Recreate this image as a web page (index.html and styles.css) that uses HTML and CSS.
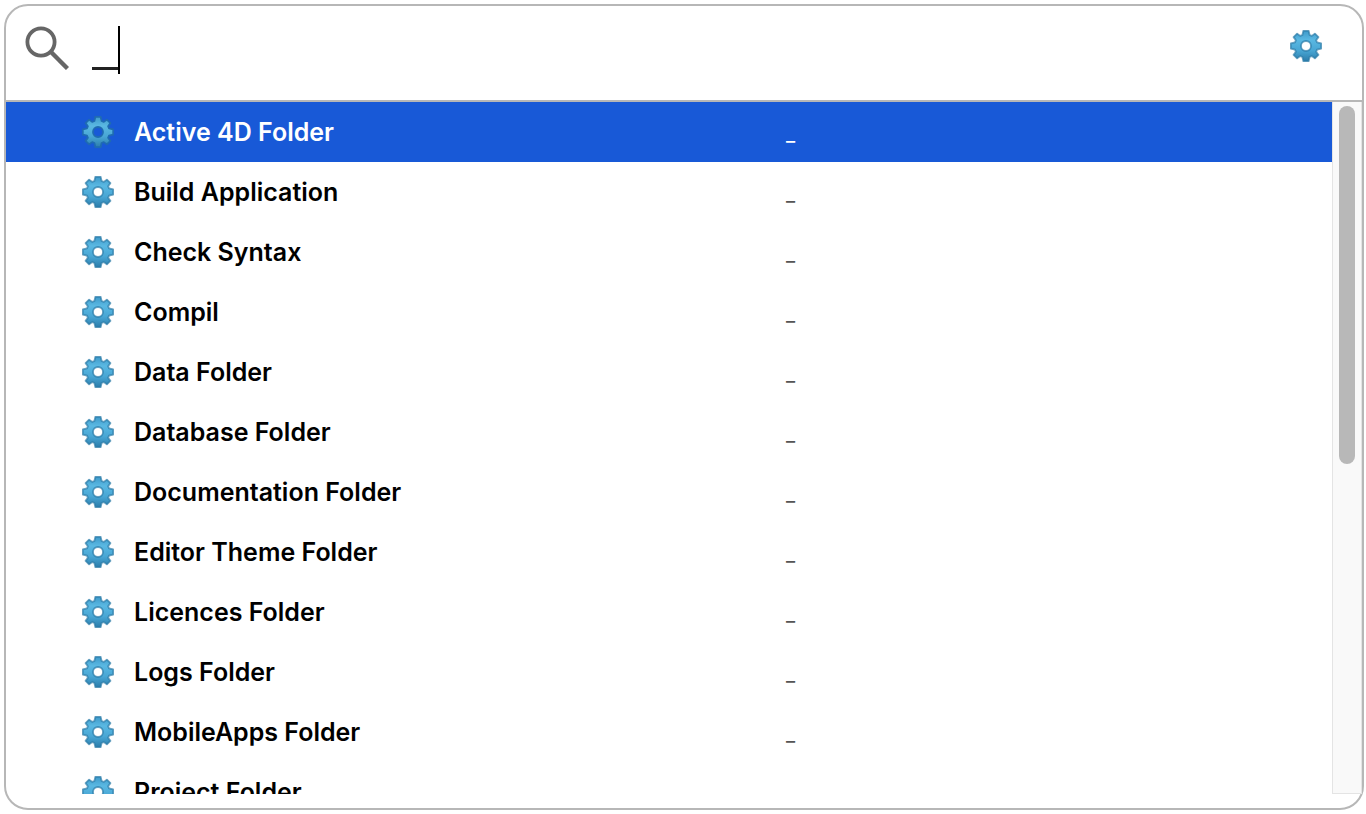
FILE: index.html
```html
<!DOCTYPE html>
<html lang="en">
<head>
<meta charset="utf-8">
<title>Quick Open</title>
<link rel="stylesheet" href="styles.css">
</head>
<body>
<svg class="defs" aria-hidden="true">
  <defs>
    <linearGradient id="gear-fill" x1="0" y1="0" x2="0" y2="1">
      <stop offset="0" stop-color="#3f9aca"/>
      <stop offset="0.3" stop-color="#5ab8e2"/>
      <stop offset="0.65" stop-color="#48a6d4"/>
      <stop offset="1" stop-color="#2c7dab"/>
    </linearGradient>
    <symbol id="gear" viewBox="0 0 32 32">
      <path class="gear-shape" fill="url(#gear-fill)" stroke-width="1.8" stroke-linejoin="round" fill-rule="evenodd" d="M13.4 .8H18.6L19.6 5 21.8 5.9 24.9 3.6 28.4 7.1 26.1 10.2 27 12.4 31.2 13.4V18.6L27 19.6 26.1 21.8 28.4 24.9 24.9 28.4 21.8 26.1 19.6 27 18.6 31.2H13.4L12.4 27 10.2 26.1 7.1 28.4 3.6 24.9 5.9 21.8 5 19.6.8 18.6V13.4L5 12.4 5.9 10.2 3.6 7.1 7.1 3.6 10.2 5.9 12.4 5ZM16 11A5 5 0 1 0 16 21A5 5 0 1 0 16 11Z"/>
    </symbol>
  </defs>
</svg>
<main class="panel">
  <header class="search">
    <svg class="search-icon" viewBox="0 0 44 44" aria-hidden="true">
      <circle cx="16" cy="16" r="13.6" fill="none" stroke="#666" stroke-width="3.8"/>
      <path d="M25.5 25.5L42.5 42.5" stroke="#666" stroke-width="4.4"/>
    </svg>
    <div class="field">
      <input class="query" type="text" aria-label="Search" value="_">
      <span class="caret"></span>
    </div>
    <button class="settings" type="button" aria-label="Settings"><svg class="gear"><use href="#gear"/></svg></button>
  </header>
  <div class="results">
    <ul class="list" role="listbox" aria-label="Commands">
      <li class="row selected" role="option" aria-selected="true"><svg class="gear"><use href="#gear"/></svg><span class="name">Active 4D Folder</span><span class="key">_</span></li>
      <li class="row" role="option"><svg class="gear"><use href="#gear"/></svg><span class="name">Build Application</span><span class="key">_</span></li>
      <li class="row" role="option"><svg class="gear"><use href="#gear"/></svg><span class="name">Check Syntax</span><span class="key">_</span></li>
      <li class="row" role="option"><svg class="gear"><use href="#gear"/></svg><span class="name">Compil</span><span class="key">_</span></li>
      <li class="row" role="option"><svg class="gear"><use href="#gear"/></svg><span class="name">Data Folder</span><span class="key">_</span></li>
      <li class="row" role="option"><svg class="gear"><use href="#gear"/></svg><span class="name">Database Folder</span><span class="key">_</span></li>
      <li class="row" role="option"><svg class="gear"><use href="#gear"/></svg><span class="name">Documentation Folder</span><span class="key">_</span></li>
      <li class="row" role="option"><svg class="gear"><use href="#gear"/></svg><span class="name">Editor Theme Folder</span><span class="key">_</span></li>
      <li class="row" role="option"><svg class="gear"><use href="#gear"/></svg><span class="name">Licences Folder</span><span class="key">_</span></li>
      <li class="row" role="option"><svg class="gear"><use href="#gear"/></svg><span class="name">Logs Folder</span><span class="key">_</span></li>
      <li class="row" role="option"><svg class="gear"><use href="#gear"/></svg><span class="name">MobileApps Folder</span><span class="key">_</span></li>
      <li class="row" role="option"><svg class="gear"><use href="#gear"/></svg><span class="name">Project Folder</span></li>
    </ul>
    <div class="track"><div class="thumb"></div></div>
  </div>
</main>
</body>
</html>
```
FILE: styles.css
```css
* { box-sizing: border-box; }

body {
  margin: 0;
  padding: 4px 2px 4px 4px;
  height: 100vh;
  background: #fff;
  color: #000;
  font-family: Inter, "Liberation Sans", sans-serif;
}

.defs {
  position: absolute;
  width: 0;
  height: 0;
}

.panel {
  display: flex;
  flex-direction: column;
  height: 100%;
  padding-bottom: 14px;
  border: 2px solid #b7b7b7;
  border-radius: 24px;
}

.search {
  display: flex;
  align-items: flex-start;
  padding: 10px 40px 28px 19px;
  border-bottom: 2px solid #b7b7b7;
}

.search-icon {
  flex: none;
  width: 44px;
  height: 44px;
  margin-top: 10px;
}

.field {
  position: relative;
  flex: 1;
  margin-left: 23px;
}

.query {
  display: block;
  width: 100%;
  height: 56px;
  padding: 0;
  border: 0;
  outline: 0;
  background: transparent;
  color: #222;
  font-family: "Liberation Sans", Arial, sans-serif;
  font-size: 48px;
  line-height: 56px;
}

.caret {
  position: absolute;
  top: 10px;
  left: 26px;
  width: 2px;
  height: 48px;
  background: #000;
}

.settings {
  flex: none;
  margin-top: 14px;
  padding: 0;
  border: 0;
  background: transparent;
}

.gear {
  --gear-edge: rgba(43, 123, 166, 0.7);
  display: block;
  width: 32px;
  height: 32px;
}

.gear-shape { stroke: var(--gear-edge); }

.results {
  display: flex;
  flex: 1;
  min-height: 0;
}

.list {
  flex: 1;
  margin: 0;
  padding: 0;
  overflow: hidden;
  list-style: none;
}

.row {
  display: grid;
  grid-template-columns: 32px 22fr 19fr;
  column-gap: 20px;
  align-items: center;
  height: 60px;
  padding-left: 76px;
}

.name {
  font-size: 25px;
  font-weight: 600;
  line-height: 32px;
}

.key {
  padding-top: 4px;
  color: #555;
  font-size: 20px;
  line-height: 32px;
}

.selected {
  background: #1859d7;
  color: #fff;
}

.selected .key { color: #fff; }

.selected .gear { --gear-edge: #1f6bb2; }

.track {
  width: 30px;
  padding: 4px 6px;
  border: 1px solid #e4e4e4;
  border-top: 0;
  background: #f9f9f9;
}

.thumb {
  width: 16px;
  height: 358px;
  border-radius: 8px;
  background: #b8b8b8;
}
```
